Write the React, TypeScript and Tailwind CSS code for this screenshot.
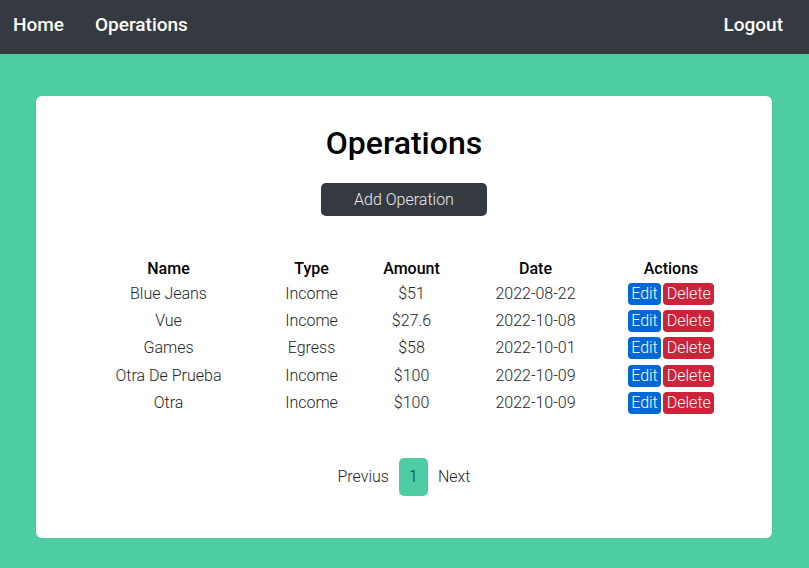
const rows = [
  { name: 'Blue Jeans', type: 'Income', amount: '$51', date: '2022-08-22' },
  { name: 'Vue', type: 'Income', amount: '$27.6', date: '2022-10-08' },
  { name: 'Games', type: 'Egress', amount: '$58', date: '2022-10-01' },
  { name: 'Otra De Prueba', type: 'Income', amount: '$100', date: '2022-10-09' },
  { name: 'Otra', type: 'Income', amount: '$100', date: '2022-10-09' },
];

const cols = 'grid grid-cols-[154px_132px_68px_180px_91px] justify-center';

export default function App() {
  return (
    <div className="min-h-[568px] bg-[#4ecda4] font-['Roboto',sans-serif]">
      <nav className="flex h-[54px] items-center justify-between bg-[#343a40] px-[13px] pb-[4px] text-[19px] font-medium text-white">
        <div className="flex gap-[31px]">
          <a>Home</a>
          <a>Operations</a>
        </div>
        <a className="mr-[13px]">Logout</a>
      </nav>

      <main className="pl-9 pr-[37px] pt-[42px] pb-[30px]">
        <div className="flex flex-col items-center rounded-md bg-white pt-[23px] pb-[42px]">
          <h1 className="text-[32px] font-medium leading-[48px] text-black">Operations</h1>
          <button className="mt-[16px] h-[33px] w-[166px] rounded-[5px] bg-[#343a40] text-base font-light text-[#e9ecef]">
            Add Operation
          </button>

          <div className="mt-[41px] w-full text-base text-[#212529]">
            <div className={`${cols} h-[23px] items-center text-center font-medium text-black`}>
              <div>Name</div>
              <div>Type</div>
              <div>Amount</div>
              <div>Date</div>
              <div>Actions</div>
            </div>
            {rows.map((r, i) => (
              <div key={i} className={`${cols} h-[27.3px] items-center text-center font-light`}>
                <div>{r.name}</div>
                <div>{r.type}</div>
                <div>{r.amount}</div>
                <div>{r.date}</div>
                <div className="flex justify-center gap-[2px]">
                  <button className="h-[22px] rounded-[4px] bg-[#0067d6] px-[3.5px] leading-[22px] text-white">Edit</button>
                  <button className="h-[22px] rounded-[4px] bg-[#cc2338] px-[3.5px] leading-[22px] text-white">Delete</button>
                </div>
              </div>
            ))}
          </div>

          <div className="mt-[42px] flex items-center gap-[10px] text-base font-light text-[#212529]">
            <span>Previus</span>
            <span className="flex h-[38px] w-[29px] items-center justify-center rounded-[5px] bg-[#4ecda4]">1</span>
            <span>Next</span>
          </div>
        </div>
      </main>
    </div>
  );
}
